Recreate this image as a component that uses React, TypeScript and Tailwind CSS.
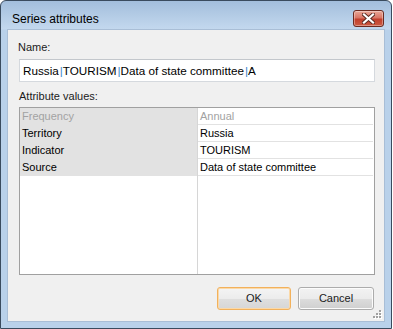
import React from "react";

type Attr = {
  name: string;
  value: string;
  muted?: boolean;
};

const ATTRS: Attr[] = [
  { name: "Frequency", value: "Annual", muted: true },
  { name: "Territory", value: "Russia" },
  { name: "Indicator", value: "TOURISM" },
  { name: "Source", value: "Data of state committee" },
];

const NAME_PARTS = ["Russia", "TOURISM", "Data of state committee", "A"];

function CloseButton() {
  return (
    <div className="mt-[9px] mr-[7px] flex h-[17px] w-[31px] items-center justify-center rounded-[3px] border border-[#6b2a20] bg-[linear-gradient(to_bottom,#eaa898_0%,#d97565_45%,#c23f2c_55%,#cc5a42_100%)] shadow-[inset_0_0_0_1px_rgba(255,255,255,0.35)]">
      <svg width="13" height="11" viewBox="0 0 13 11">
        <path d="M2 1.5 L11 9.5 M11 1.5 L2 9.5" stroke="#5a2a22" strokeWidth="4" strokeLinecap="square" />
        <path d="M2 1.5 L11 9.5 M11 1.5 L2 9.5" stroke="#ffffff" strokeWidth="2.2" strokeLinecap="square" />
      </svg>
    </div>
  );
}

function Grip() {
  const dots = [
    [6, 0],
    [3, 3],
    [6, 3],
    [0, 6],
    [3, 6],
    [6, 6],
  ];
  return (
    <svg width="9" height="9" viewBox="0 0 9 9" className="absolute bottom-[2px] right-[2px]">
      {dots.map(([x, y]) => (
        <g key={`${x}-${y}`}>
          <rect x={x + 1} y={y + 1} width="2" height="2" fill="#ffffff" />
          <rect x={x} y={y} width="2" height="2" fill="#a0a0a0" />
        </g>
      ))}
    </svg>
  );
}

function WinButton({ label, isDefault }: { label: string; isDefault?: boolean }) {
  return (
    <div
      className={
        isDefault
          ? "flex h-[23px] w-[74px] items-center justify-center rounded-[3px] border border-[#f2b15c] bg-[linear-gradient(to_bottom,#f4f4f4_0%,#ececec_50%,#dfdfdf_51%,#d6d6d6_100%)] text-[11px] text-[#1b1b1b] shadow-[inset_0_0_0_1px_#fbd9a8]"
          : "flex h-[23px] w-[76px] items-center justify-center rounded-[3px] border border-[#acacac] bg-[linear-gradient(to_bottom,#f2f2f2_0%,#ebebeb_50%,#dddddd_51%,#cfcfcf_100%)] text-[11px] text-[#1b1b1b] shadow-[inset_0_0_0_1px_#fcfcfc]"
      }
    >
      {label}
    </div>
  );
}

export default function App() {
  return (
    <div className="h-[329px] w-[393px] overflow-hidden bg-white" style={{ fontFamily: '"Liberation Sans", Arial, sans-serif' }}>
      <div className="flex h-[329px] w-[392px] flex-col rounded-t-[6px] border border-[#3a4b5e] bg-[linear-gradient(to_bottom,#a3bedc_0px,#c3d8ee_28px,#b9d1ea_29px,#b9d1ea_100%)]">
        {/* title bar */}
        <div className="flex h-[28px] items-start justify-between">
          <span className="ml-[11px] mt-[10px] text-[12px] leading-[16px] text-black">Series attributes</span>
          <CloseButton />
        </div>

        {/* client area */}
        <div className="relative mx-[6px] h-[293px] border border-[#a9bed6] bg-[#f0f0f0] pl-[11px] pr-[9px]">
          <div className="-ml-px mt-[10px] h-[14px] text-[11px] leading-[14px] text-[#1b1b1b]">Name:</div>

          <div className="mt-[5px] flex h-[23px] items-center border border-[#d5d9de] border-t-[#c3c7cc] bg-white pl-[3px] text-[11.7px] text-black">
            {NAME_PARTS.map((p, i) => (
              <React.Fragment key={i}>
                {i > 0 ? <span className="ml-px text-[#3d86cc]">|</span> : null}
                <span>{p}</span>
              </React.Fragment>
            ))}
          </div>

          <div className="mt-[7px] h-[14px] text-[11px] leading-[14px] text-[#1b1b1b]">Attribute values:</div>

          <div className="mt-[4px] grid h-[168px] grid-cols-[178px_1fr] border border-[#a0a0a0] bg-white text-[11px]">
            <div className="flex flex-col border-r border-[#d6d6d6]">
              {ATTRS.map((a) => (
                <div
                  key={a.name}
                  className={`h-[17px] border-b border-[#e2e2e2] bg-[#e2e2e2] pl-[2px] leading-[16px] ${a.muted ? "text-[#a2a2a2]" : "text-black"}`}
                >
                  {a.name}
                </div>
              ))}
            </div>
            <div className="flex flex-col pr-[1px]">
              {ATTRS.map((a) => (
                <div
                  key={a.name}
                  className={`h-[17px] border-b border-[#e2e2e2] pl-[2px] leading-[16px] ${a.muted ? "text-[#a2a2a2]" : "text-black"}`}
                >
                  {a.value}
                </div>
              ))}
            </div>
          </div>

          <div className="mt-[12px] flex justify-end gap-[7px] pr-[1px]">
            <WinButton label="OK" isDefault />
            <WinButton label="Cancel" />
          </div>

          <Grip />
        </div>
      </div>
    </div>
  );
}
